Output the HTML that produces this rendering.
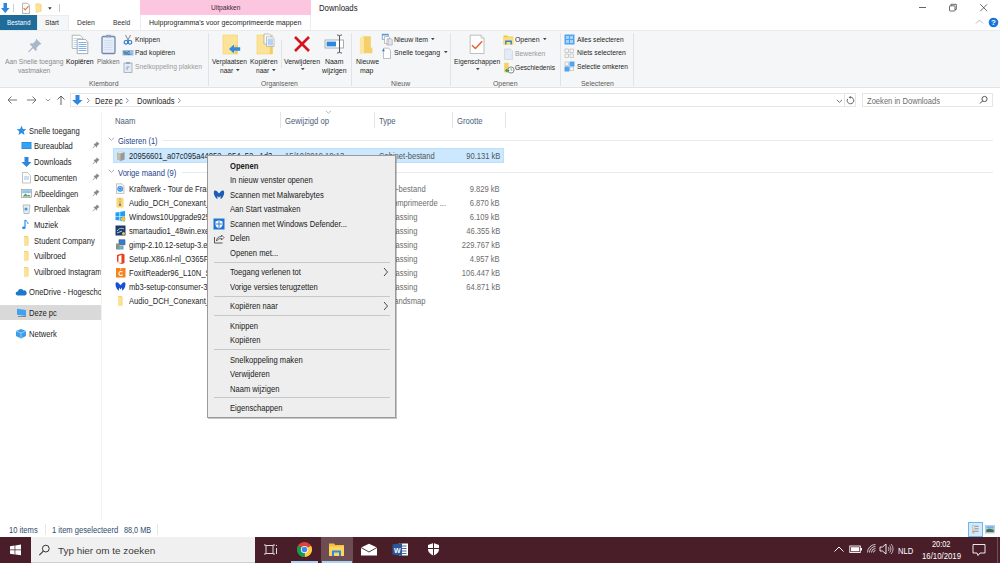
<!DOCTYPE html>
<html><head><meta charset="utf-8">
<style>
*{box-sizing:border-box;margin:0;padding:0}
html,body{width:1000px;height:563px;overflow:hidden;background:#fff;font-family:"Liberation Sans",sans-serif;position:relative}
.a{position:absolute}
.t{position:absolute;white-space:nowrap;line-height:10px}
svg{overflow:visible}
</style></head><body>
<div class="a" style="left:140px;top:0px;width:171px;height:15px;background:#fcc6e0"></div>
<div class="t" style="left:211px;top:2.5px;font-size:6.6px;color:#3b2b33;">Uitpakken</div>
<div class="t" style="left:318.5px;top:3.3000000000000007px;font-size:8.76px;color:#222;transform:scaleX(0.89);transform-origin:0 50%;">Downloads</div>
<svg class="a" style="left:0px;top:2px" width="12" height="12" viewBox="0 0 12 12"><path d="M3.5 1h3.5v5h2.5l-4.25 5-4.25-5h2.5z" fill="#2e86de"/></svg>
<div class="a" style="left:13px;top:4px;width:1px;height:8px;background:#cfcfcf"></div>
<svg class="a" style="left:21px;top:2px" width="10" height="12" viewBox="0 0 10 12"><path d="M1.5 1.2h5l2 2v8.3h-7z" fill="#f8f8f8" stroke="#9a9a9a" stroke-width="0.7"/><path d="M2.6 6.2l1.6 1.6 3.4-3.6" stroke="#ee6a35" stroke-width="1.1" fill="none"/></svg>
<svg class="a" style="left:35px;top:3px" width="8" height="10" viewBox="0 0 8 10"><path d="M0.5 0.5h4.5l1.5 1.2v6.8l-5.5 1.5z" fill="#f5d36e"/><path d="M0.5 1.5l5-.5v7.5l-5 1.3z" fill="#fbe29a"/></svg>
<svg class="a" style="left:48px;top:7px" width="4" height="3" viewBox="0 0 4 3"><path d="M0.2 0.2h3.4L1.9 2.8z" fill="#333"/></svg>
<div class="a" style="left:59px;top:4px;width:1px;height:8px;background:#c8c8c8"></div>
<div class="a" style="left:919px;top:7px;width:7px;height:1px;background:#666"></div>
<svg class="a" style="left:948px;top:3px" width="10" height="10" viewBox="0 0 10 10"><rect x="1.5" y="2.8" width="5.5" height="5.2" rx="0.6" fill="none" stroke="#444" stroke-width="0.8"/><path d="M3 2.8V1.3h5.3v5.2H7" fill="none" stroke="#444" stroke-width="0.8"/></svg>
<svg class="a" style="left:979px;top:3px" width="10" height="10" viewBox="0 0 10 10"><path d="M1.3 1.3l6.8 6.8M8.1 1.3l-6.8 6.8" stroke="#444" stroke-width="0.8"/></svg>
<div class="a" style="left:0px;top:15px;width:37px;height:15px;background:#1f6b99"></div>
<div class="t" style="left:7px;top:17.5px;font-size:6.4px;color:#ffffff;">Bestand</div>
<div class="a" style="left:37px;top:15px;width:32px;height:16px;background:#f5f6f7;border:1px solid #ebeced;border-bottom:none"></div>
<div class="t" style="left:45px;top:17.5px;font-size:6.6px;color:#262626;">Start</div>
<div class="t" style="left:77px;top:17.5px;font-size:6.8px;color:#333;">Delen</div>
<div class="t" style="left:113px;top:17.5px;font-size:6.7px;color:#333;">Beeld</div>
<div class="a" style="left:140px;top:15px;width:171px;height:15px;background:#fff;border-left:1px solid #ececec;border-right:1px solid #ececec"></div>
<div class="t" style="left:149px;top:17.5px;font-size:7.0px;color:#262626;">Hulpprogramma's voor gecomprimeerde mappen</div>
<svg class="a" style="left:975px;top:19px" width="9" height="6" viewBox="0 0 9 6"><path d="M1 4.5l3.5-3.5 3.5 3.5" stroke="#a8a8a8" stroke-width="0.8" fill="none"/></svg>
<svg class="a" style="left:988px;top:17px" width="11" height="11" viewBox="0 0 11 11"><circle cx="5.5" cy="5.5" r="4.8" fill="#1a73d9"/><text x="5.5" y="8.3" font-size="8" font-weight="bold" text-anchor="middle" fill="#fff" font-family="Liberation Sans">?</text></svg>
<div class="a" style="left:0px;top:30px;width:1000px;height:58px;background:#f5f6f7;border-top:1px solid #e9eaeb;border-bottom:1px solid #e2e3e4"></div>
<div class="a" style="left:208px;top:33px;width:1px;height:53px;background:#e2e3e4"></div>
<div class="a" style="left:351px;top:33px;width:1px;height:53px;background:#e2e3e4"></div>
<div class="a" style="left:450px;top:33px;width:1px;height:53px;background:#e2e3e4"></div>
<div class="a" style="left:560px;top:33px;width:1px;height:53px;background:#e2e3e4"></div>
<div class="a" style="left:633px;top:33px;width:1px;height:53px;background:#e2e3e4"></div>
<div class="a" style="left:281px;top:40px;width:1px;height:28px;background:#e2e3e4"></div>
<svg class="a" style="left:27px;top:37px" width="16" height="16" viewBox="0 0 16 16"><path d="M9 1.5l5.5 5.5-2 .8-3 3 .3 2.2-1 1-2.8-2.8L2 15.3l-.8-.3.2-.8 4.1-4.1L2.7 7.3l1-1 2.2.3 3-3z" fill="#a8b7cc"/></svg>
<div class="t" style="left:5px;top:56.5px;font-size:6.7px;color:#8a8a8a;">Aan Snelle toegang</div>
<div class="t" style="left:18px;top:65.6px;font-size:6.7px;color:#8a8a8a;">vastmaken</div>
<svg class="a" style="left:71px;top:34px" width="19" height="21" viewBox="0 0 19 21"><path d="M1.2 1.2h7.8l2.3 2.3v11H1.2z" fill="#fff" stroke="#9a9a9a" stroke-width="0.7"/><path d="M2.5 4.5h7.5M2.5 6.5h7.5M2.5 8.5h7.5M2.5 10.5h7.5M2.5 12.5h7.5" stroke="#a9ccf2" stroke-width="0.75"/><path d="M6.2 5.4h8.3l2.3 2.3v11.9H6.2z" fill="#fff" stroke="#8a8a8a" stroke-width="0.7"/><path d="M7.5 8.5h8M7.5 10.5h8M7.5 12.5h8M7.5 14.5h8M7.5 16.5h8" stroke="#7fb2ea" stroke-width="1"/></svg>
<div class="t" style="left:66px;top:56.5px;font-size:6.9px;color:#111111;">Kopiëren</div>
<svg class="a" style="left:100px;top:34px" width="17" height="21" viewBox="0 0 17 21"><rect x="2" y="2.5" width="13" height="17" rx="1.2" fill="#e6eefa" stroke="#7387aa" stroke-width="1.3"/><rect x="6" y="0.8" width="5" height="2.5" fill="#8e9fbd"/><path d="M4.2 6.5h8.6M4.2 8.8h8.6M4.2 11.1h8.6M4.2 13.4h8.6M4.2 15.7h8.6" stroke="#c9d8ee" stroke-width="0.8"/></svg>
<div class="t" style="left:97px;top:56.5px;font-size:6.3px;color:#6a6a6a;">Plakken</div>
<svg class="a" style="left:123px;top:34px" width="10" height="11" viewBox="0 0 10 11"><path d="M2.5 1l3 6M7.5 1l-3 6" stroke="#777" stroke-width="0.9"/><circle cx="3" cy="8.3" r="1.8" fill="none" stroke="#2b7fd0" stroke-width="1.2"/><circle cx="7" cy="8.3" r="1.8" fill="none" stroke="#2b7fd0" stroke-width="1.2"/></svg>
<div class="t" style="left:135px;top:34.5px;font-size:6.8px;color:#262626;">Knippen</div>
<svg class="a" style="left:122px;top:49px" width="12" height="8" viewBox="0 0 12 8"><rect x="0.5" y="1" width="11" height="5.5" fill="#8fc3ef"/><text x="1.3" y="5.6" font-size="4.5" fill="#223" font-family="Liberation Sans">%0..</text></svg>
<div class="t" style="left:135px;top:48px;font-size:6.8px;color:#262626;">Pad kopiëren</div>
<svg class="a" style="left:123px;top:61px" width="10" height="12" viewBox="0 0 10 12"><rect x="1" y="2" width="8" height="9.5" fill="#e4ebf4" stroke="#9aa8bb" stroke-width="0.8"/><rect x="3" y="1" width="4" height="2" fill="#9aa8bb"/><path d="M4 9V6h2.5" stroke="#7a8aa8" stroke-width="0.8" fill="none"/></svg>
<div class="t" style="left:135px;top:61.5px;font-size:6.7px;color:#9a9a9a;">Snelkoppeling plakken</div>
<div class="t" style="left:89px;top:78.5px;font-size:6.9px;color:#5b5b5b;">Klembord</div>
<svg class="a" style="left:221px;top:34px" width="20" height="21" viewBox="0 0 20 21"><rect x="2" y="1" width="14.5" height="19" fill="#fce39a"/><rect x="2" y="1" width="14.5" height="19" fill="none" stroke="#f3cf62" stroke-width="0.6"/><rect x="13.8" y="11" width="2.7" height="9" fill="#f5cd5c"/><path d="M8 15l5-4.5v2.8h6.2v3.4H13v2.8z" fill="#2f8ae0"/></svg>
<div class="t" style="left:212px;top:56.5px;font-size:6.6px;color:#262626;">Verplaatsen</div>
<div class="t" style="left:220px;top:65.6px;font-size:6.6px;color:#262626;">naar</div>
<svg class="a" style="left:235.5px;top:68.8px" width="4" height="3" viewBox="0 0 4 3"><path d="M0 0h3.6L1.8 2.2z" fill="#444"/></svg>
<svg class="a" style="left:255px;top:33px" width="22" height="22" viewBox="0 0 22 22"><rect x="2" y="2" width="15.5" height="19" fill="#fce39a" stroke="#f3cf62" stroke-width="0.6"/><rect x="14.8" y="12" width="2.7" height="9" fill="#f5cd5c"/><path d="M9 1h5.5l1.5 1.5V11H9z" fill="#fafafa" stroke="#9a9a9a" stroke-width="0.6"/><path d="M11.5 3.8h5.8l1.7 1.7V13.5h-7.5z" fill="#fff" stroke="#9a9a9a" stroke-width="0.6"/><rect x="12.6" y="5.5" width="5.4" height="7" fill="#b5d2f7"/></svg>
<div class="t" style="left:250px;top:56.5px;font-size:6.9px;color:#262626;">Kopiëren</div>
<div class="t" style="left:256px;top:65.6px;font-size:6.6px;color:#262626;">naar</div>
<svg class="a" style="left:271.5px;top:68.8px" width="4" height="3" viewBox="0 0 4 3"><path d="M0 0h3.6L1.8 2.2z" fill="#444"/></svg>
<svg class="a" style="left:293px;top:35px" width="18" height="18" viewBox="0 0 18 18"><path d="M2 2l14 14M16 2L2 16" stroke="#d8121f" stroke-width="2.6"/></svg>
<div class="t" style="left:284px;top:56.5px;font-size:6.9px;color:#262626;">Verwijderen</div>
<svg class="a" style="left:300.5px;top:67.8px" width="4" height="3" viewBox="0 0 4 3"><path d="M0 0h3.6L1.8 2.2z" fill="#444"/></svg>
<svg class="a" style="left:324px;top:34px" width="22" height="20" viewBox="0 0 22 20"><rect x="1" y="6" width="18.5" height="8" fill="#fff" stroke="#9a9a9a" stroke-width="0.8"/><rect x="2.6" y="7.6" width="9.4" height="4.8" fill="#2b88e0"/><path d="M15.5 1.5v17M13 1c1.3 0 2.5.5 2.5 1.5 0-1 1.2-1.5 2.5-1.5M13 19c1.3 0 2.5-.5 2.5-1.5 0 1 1.2 1.5 2.5 1.5" stroke="#444" stroke-width="0.9" fill="none"/></svg>
<div class="t" style="left:325px;top:56.5px;font-size:6.9px;color:#262626;">Naam</div>
<div class="t" style="left:322px;top:65.6px;font-size:6.9px;color:#262626;">wijzigen</div>
<div class="t" style="left:261px;top:78.5px;font-size:6.7px;color:#5b5b5b;">Organiseren</div>
<svg class="a" style="left:358px;top:35px" width="17" height="20" viewBox="0 0 17 20"><path d="M4.5 1.2h8.3v10.8l1.6 1.6v4.6H4.5z" fill="#f5d06a"/><path d="M1.8 2.8L6 1.2v16.6l-4.2 1.7z" fill="#fce6a4"/></svg>
<div class="t" style="left:356px;top:56.5px;font-size:6.9px;color:#262626;">Nieuwe</div>
<div class="t" style="left:360px;top:65.6px;font-size:6.9px;color:#262626;">map</div>
<svg class="a" style="left:381px;top:33px" width="13" height="13" viewBox="0 0 13 13"><rect x="1.2" y="1.2" width="6" height="5" fill="#fff" stroke="#4a8fd6" stroke-width="0.7"/><rect x="1.2" y="1.2" width="6" height="1.2" fill="#4a8fd6"/><path d="M3.5 3.5h4l1 1v6h-5z" fill="#fff" stroke="#999" stroke-width="0.6"/><path d="M6 5.8h4.2l1 1v5.2H6z" fill="#dceaf8" stroke="#999" stroke-width="0.6"/><path d="M7.5 6v6" stroke="#e7a4b4" stroke-width="0.6"/></svg>
<div class="t" style="left:394px;top:34.5px;font-size:6.9px;color:#262626;">Nieuw item</div>
<svg class="a" style="left:430.5px;top:37.8px" width="4" height="3" viewBox="0 0 4 3"><path d="M0 0h3.6L1.8 2.2z" fill="#444"/></svg>
<svg class="a" style="left:381px;top:47px" width="11" height="12" viewBox="0 0 11 12"><path d="M2.5 1.2h5l2 2v8.3h-7z" fill="#fff" stroke="#999" stroke-width="0.6"/><path d="M0.8 4.2l2-2.6 .9 2.6z" fill="#2b7fd0"/></svg>
<div class="t" style="left:394px;top:48px;font-size:6.9px;color:#262626;">Snelle toegang</div>
<svg class="a" style="left:443.5px;top:51.3px" width="4" height="3" viewBox="0 0 4 3"><path d="M0 0h3.6L1.8 2.2z" fill="#444"/></svg>
<div class="t" style="left:391px;top:78.5px;font-size:6.9px;color:#5b5b5b;">Nieuw</div>
<svg class="a" style="left:468px;top:34px" width="18" height="21" viewBox="0 0 18 21"><path d="M2.2 1.2h10.8l3 3v15.3H2.2z" fill="#fff" stroke="#a5a5a5" stroke-width="0.7"/><path d="M13 1.2v3h3" fill="#eee" stroke="#b5b5b5" stroke-width="0.6"/><path d="M4 11.3l3.4 3.2 6.8-7.2" stroke="#e8602c" stroke-width="1.4" fill="none"/></svg>
<div class="t" style="left:454px;top:56.5px;font-size:6.7px;color:#262626;">Eigenschappen</div>
<svg class="a" style="left:475.5px;top:67.8px" width="4" height="3" viewBox="0 0 4 3"><path d="M0 0h3.6L1.8 2.2z" fill="#444"/></svg>
<svg class="a" style="left:503px;top:35px" width="11" height="10" viewBox="0 0 11 10"><path d="M0.5 0.5h3.5l1 1h5v8H0.5z" fill="#f3c343"/><rect x="0.5" y="2.2" width="10" height="7.3" fill="#fcdc7c"/><path d="M2.8 9.5V6.2h5.4v3.3" stroke="#2b85db" stroke-width="1.4" fill="none"/></svg>
<div class="t" style="left:515px;top:35px;font-size:6.9px;color:#262626;">Openen</div>
<svg class="a" style="left:542.5px;top:38.3px" width="4" height="3" viewBox="0 0 4 3"><path d="M0 0h3.6L1.8 2.2z" fill="#444"/></svg>
<svg class="a" style="left:503px;top:48px" width="11" height="12" viewBox="0 0 11 12"><path d="M1.5 1h6l2 2v8.5h-8z" fill="#e2eaf5" stroke="#c5d0de" stroke-width="0.6"/><path d="M2.8 10l5.6-7.2" stroke="#fff" stroke-width="1.3"/><path d="M2.8 10l5.6-7.2" stroke="#b8c6d8" stroke-width="0.5"/></svg>
<div class="t" style="left:515px;top:49px;font-size:6.8px;color:#9a9a9a;">Bewerken</div>
<svg class="a" style="left:503px;top:62px" width="12" height="12" viewBox="0 0 12 12"><path d="M1.2 0.8h4.5v9.5H1.2z" fill="#f6d060"/><circle cx="8" cy="8" r="3.1" fill="#fff" stroke="#6a6a6a" stroke-width="0.8"/><path d="M8 6v2.2h1.5" stroke="#6a6a6a" stroke-width="0.6" fill="none"/><path d="M1.8 8.6l2.6-2.2v1.3h1.8v1.8H4.4v1.3z" fill="#2ea44f"/></svg>
<div class="t" style="left:515px;top:63px;font-size:6.6px;color:#262626;">Geschiedenis</div>
<div class="t" style="left:493px;top:78.5px;font-size:6.9px;color:#5b5b5b;">Openen</div>
<svg class="a" style="left:564px;top:34px" width="11" height="11" viewBox="0 0 11 11"><rect x="0.5" y="0.5" width="10" height="10" fill="#4fa3ef"/><path d="M2 2h3v3H2zM6 2h3v3H6zM2 6h3v3H2zM6 6h3v3H6z" fill="#a9d3fa"/></svg>
<div class="t" style="left:577px;top:34.5px;font-size:6.6px;color:#262626;">Alles selecteren</div>
<svg class="a" style="left:564px;top:48px" width="11" height="11" viewBox="0 0 11 11"><path d="M1 1h3.5v3.5H1zM6 1h3.5v3.5H6zM1 6h3.5v3.5H1zM6 6h3.5v3.5H6z" fill="none" stroke="#bbb" stroke-width="0.7"/></svg>
<div class="t" style="left:577px;top:48px;font-size:6.8px;color:#262626;">Niets selecteren</div>
<svg class="a" style="left:564px;top:61px" width="11" height="11" viewBox="0 0 11 11"><path d="M1 1h3.5v3.5H1zM6 6h3.5v3.5H6z" fill="none" stroke="#bbb" stroke-width="0.7"/><rect x="5.5" y="0.5" width="5" height="5" fill="#4fa3ef"/><rect x="0.5" y="5.5" width="5" height="5" fill="#4fa3ef"/></svg>
<div class="t" style="left:577px;top:61.5px;font-size:6.6px;color:#262626;">Selectie omkeren</div>
<div class="t" style="left:581px;top:78.5px;font-size:6.9px;color:#5b5b5b;">Selecteren</div>
<svg class="a" style="left:6px;top:95px" width="12" height="10" viewBox="0 0 12 10"><path d="M2 5h9M5.5 1.5L2 5l3.5 3.5" stroke="#666" stroke-width="0.9" fill="none"/></svg>
<svg class="a" style="left:26px;top:95px" width="12" height="10" viewBox="0 0 12 10"><path d="M1 5h9M6.5 1.5L10 5 6.5 8.5" stroke="#666" stroke-width="0.9" fill="none"/></svg>
<svg class="a" style="left:45px;top:98px" width="6" height="4" viewBox="0 0 6 4"><path d="M0.8 0.8l2.2 2.2 2.2-2.2" stroke="#888" stroke-width="0.8" fill="none"/></svg>
<svg class="a" style="left:56px;top:94px" width="10" height="12" viewBox="0 0 10 12"><path d="M5 11V2M1.5 5.5L5 2l3.5 3.5" stroke="#555" stroke-width="0.9" fill="none"/></svg>
<div class="a" style="left:70px;top:93px;width:786px;height:14px;background:#fff;border:1px solid #e6e6e6"></div>
<div class="a" style="left:844px;top:94px;width:1px;height:13px;background:#e3e3e3"></div>
<svg class="a" style="left:72px;top:94px" width="11" height="12" viewBox="0 0 11 12"><path d="M3.5 1h4v5h3l-5.2 5L0.1 6h3.4z" fill="#2e86de"/></svg>
<svg class="a" style="left:86px;top:97px" width="5" height="7" viewBox="0 0 5 7"><path d="M1 1l2.3 2.5L1 6" stroke="#777" stroke-width="0.8" fill="none"/></svg>
<div class="t" style="left:95px;top:95.5px;font-size:8.54px;color:#1e1e1e;transform:scaleX(0.89);transform-origin:0 50%;">Deze pc</div>
<svg class="a" style="left:125px;top:97px" width="5" height="7" viewBox="0 0 5 7"><path d="M1 1l2.3 2.5L1 6" stroke="#777" stroke-width="0.8" fill="none"/></svg>
<div class="t" style="left:137px;top:95.5px;font-size:8.54px;color:#1e1e1e;transform:scaleX(0.89);transform-origin:0 50%;">Downloads</div>
<svg class="a" style="left:177px;top:97px" width="5" height="7" viewBox="0 0 5 7"><path d="M1 1l2.3 2.5L1 6" stroke="#777" stroke-width="0.8" fill="none"/></svg>
<svg class="a" style="left:836px;top:99px" width="7" height="5" viewBox="0 0 7 5"><path d="M0.8 0.8l2.6 2.6 2.6-2.6" stroke="#666" stroke-width="0.9" fill="none"/></svg>
<svg class="a" style="left:846px;top:94px" width="11" height="12" viewBox="0 0 11 12"><path d="M4.5 3.2A3.3 3.3 0 1 1 1.64 4.85" stroke="#555" stroke-width="0.9" fill="none"/><path d="M2.6 3.3L4.7 1.9V4.7z" fill="#555"/></svg>
<div class="a" style="left:862px;top:93px;width:131px;height:14px;background:#fff;border:1px solid #e6e6e6"></div>
<div class="t" style="left:867px;top:95.5px;font-size:8.54px;color:#6d6d6d;transform:scaleX(0.89);transform-origin:0 50%;">Zoeken in Downloads</div>
<svg class="a" style="left:979px;top:95px" width="10" height="10" viewBox="0 0 10 10"><circle cx="5.5" cy="4" r="2.6" stroke="#444" stroke-width="0.9" fill="none"/><path d="M3.6 5.9L1 8.5" stroke="#444" stroke-width="1"/></svg>
<div class="a" style="left:101px;top:112px;width:1px;height:408px;background:#f2f2f2"></div>
<div class="a" style="left:0px;top:305px;width:101px;height:15px;background:#d9d9d9"></div>
<svg class="a" style="left:16px;top:125px" width="11" height="11" viewBox="0 0 11 11"><path d="M5.5 0.8l1.4 3.2 3.4.3-2.6 2.2.8 3.4-3-1.8-3 1.8.8-3.4L.7 4.3l3.4-.3z" fill="#2b8fe6"/></svg>
<div class="t" style="left:29px;top:125.5px;font-size:8.54px;color:#1e1e1e;transform:scaleX(0.89);transform-origin:0 50%;">Snelle toegang</div>
<svg class="a" style="left:21px;top:140px" width="11" height="11" viewBox="0 0 11 11"><rect x="0.5" y="2" width="10" height="7" fill="#2a8ee6"/><rect x="1.5" y="3" width="8" height="5" fill="#3aa3f0"/></svg>
<div class="t" style="left:34px;top:141px;font-size:8.54px;color:#1e1e1e;transform:scaleX(0.89);transform-origin:0 50%;width:75px;overflow:hidden">Bureaublad</div>
<svg class="a" style="left:21px;top:156px" width="11" height="11" viewBox="0 0 11 11"><path d="M3.5 1h4v5h3l-5 5-5-5h3z" fill="#2e86de"/></svg>
<div class="t" style="left:34px;top:157px;font-size:8.54px;color:#1e1e1e;transform:scaleX(0.89);transform-origin:0 50%;width:75px;overflow:hidden">Downloads</div>
<svg class="a" style="left:21px;top:172px" width="11" height="11" viewBox="0 0 11 11"><path d="M1.5 0.5h5l3 3v7.5h-8z" fill="#fff" stroke="#aaa" stroke-width="0.7"/><path d="M3 5h5M3 7h5" stroke="#7aaee8" stroke-width="0.8"/></svg>
<div class="t" style="left:34px;top:172.5px;font-size:8.54px;color:#1e1e1e;transform:scaleX(0.89);transform-origin:0 50%;width:75px;overflow:hidden">Documenten</div>
<svg class="a" style="left:21px;top:188px" width="11" height="11" viewBox="0 0 11 11"><rect x="0.5" y="1.5" width="10" height="8" fill="#fff" stroke="#999" stroke-width="0.7"/><path d="M1.5 8.5l3-3 2 2 1.5-1 2 2z" fill="#5a9a5a"/><rect x="1.2" y="2.2" width="8.6" height="3" fill="#8cc4f0"/></svg>
<div class="t" style="left:34px;top:188.5px;font-size:8.54px;color:#1e1e1e;transform:scaleX(0.89);transform-origin:0 50%;width:75px;overflow:hidden">Afbeeldingen</div>
<svg class="a" style="left:21px;top:203px" width="11" height="11" viewBox="0 0 11 11"><path d="M2 2h7l-1 8.5H3z" fill="#e6ecf2" stroke="#9aa" stroke-width="0.7"/><circle cx="5" cy="6" r="1.5" fill="#4a90d9"/></svg>
<div class="t" style="left:34px;top:204px;font-size:8.54px;color:#1e1e1e;transform:scaleX(0.89);transform-origin:0 50%;width:75px;overflow:hidden">Prullenbak</div>
<svg class="a" style="left:21px;top:219px" width="11" height="11" viewBox="0 0 11 11"><path d="M4 1v7.5" stroke="#2b8fe6" stroke-width="1.2"/><ellipse cx="2.8" cy="8.8" rx="1.8" ry="1.4" fill="#2b8fe6"/><path d="M4 1c1.5 1 3 1.8 3 4" stroke="#2b8fe6" stroke-width="1" fill="none"/></svg>
<div class="t" style="left:34px;top:219.5px;font-size:8.54px;color:#1e1e1e;transform:scaleX(0.89);transform-origin:0 50%;width:75px;overflow:hidden">Muziek</div>
<svg class="a" style="left:21px;top:235px" width="11" height="11" viewBox="0 0 11 11"><path d="M3 1h3.5l1 1v8.5H3z" fill="#f6d36a"/><path d="M3 1.8l3.6 .6v8.6L3 10.5z" fill="#fbe39b"/></svg>
<div class="t" style="left:34px;top:235.5px;font-size:8.54px;color:#1e1e1e;transform:scaleX(0.89);transform-origin:0 50%;width:75px;overflow:hidden">Student Company</div>
<svg class="a" style="left:21px;top:250px" width="11" height="11" viewBox="0 0 11 11"><path d="M3 1h3.5l1 1v8.5H3z" fill="#f6d36a"/><path d="M3 1.8l3.6 .6v8.6L3 10.5z" fill="#fbe39b"/></svg>
<div class="t" style="left:34px;top:251px;font-size:8.54px;color:#1e1e1e;transform:scaleX(0.89);transform-origin:0 50%;width:75px;overflow:hidden">Vuilbroed</div>
<svg class="a" style="left:21px;top:266px" width="11" height="11" viewBox="0 0 11 11"><path d="M3 1h3.5l1 1v8.5H3z" fill="#f6d36a"/><path d="M3 1.8l3.6 .6v8.6L3 10.5z" fill="#fbe39b"/></svg>
<div class="t" style="left:34px;top:266.5px;font-size:8.54px;color:#1e1e1e;transform:scaleX(0.89);transform-origin:0 50%;width:75px;overflow:hidden">Vuilbroed Instagram</div>
<svg class="a" style="left:92px;top:141px" width="8" height="8" viewBox="0 0 8 8"><path d="M5 0.5l2.5 2.5-1 .4-1.5 1.5.1 1.1-.5.5-1.4-1.4L1 7.3l-.4-.1.1-.4 2.2-2.2-1.4-1.4.5-.5 1.1.1 1.5-1.5z" fill="#888"/></svg>
<svg class="a" style="left:92px;top:157px" width="8" height="8" viewBox="0 0 8 8"><path d="M5 0.5l2.5 2.5-1 .4-1.5 1.5.1 1.1-.5.5-1.4-1.4L1 7.3l-.4-.1.1-.4 2.2-2.2-1.4-1.4.5-.5 1.1.1 1.5-1.5z" fill="#888"/></svg>
<svg class="a" style="left:92px;top:173px" width="8" height="8" viewBox="0 0 8 8"><path d="M5 0.5l2.5 2.5-1 .4-1.5 1.5.1 1.1-.5.5-1.4-1.4L1 7.3l-.4-.1.1-.4 2.2-2.2-1.4-1.4.5-.5 1.1.1 1.5-1.5z" fill="#888"/></svg>
<svg class="a" style="left:92px;top:189px" width="8" height="8" viewBox="0 0 8 8"><path d="M5 0.5l2.5 2.5-1 .4-1.5 1.5.1 1.1-.5.5-1.4-1.4L1 7.3l-.4-.1.1-.4 2.2-2.2-1.4-1.4.5-.5 1.1.1 1.5-1.5z" fill="#888"/></svg>
<svg class="a" style="left:92px;top:204px" width="8" height="8" viewBox="0 0 8 8"><path d="M5 0.5l2.5 2.5-1 .4-1.5 1.5.1 1.1-.5.5-1.4-1.4L1 7.3l-.4-.1.1-.4 2.2-2.2-1.4-1.4.5-.5 1.1.1 1.5-1.5z" fill="#888"/></svg>
<svg class="a" style="left:15px;top:287px" width="12" height="10" viewBox="0 0 12 10"><path d="M2.5 8.5a2 2 0 0 1 .3-4 3 3 0 0 1 5.5-1 2.4 2.4 0 0 1 1.5 5z" fill="#1a78d0"/></svg>
<div class="t" style="left:29px;top:287.2px;font-size:8.54px;color:#1e1e1e;transform:scaleX(0.89);transform-origin:0 50%;width:81px;overflow:hidden">OneDrive - Hogeschool</div>
<svg class="a" style="left:16px;top:307px" width="12" height="11" viewBox="0 0 12 11"><rect x="1" y="1.5" width="9" height="6" fill="#3fa2ee" transform="skewY(8)"/><path d="M2 9.5h8" stroke="#888" stroke-width="1"/></svg>
<div class="t" style="left:29px;top:308px;font-size:8.54px;color:#1e1e1e;transform:scaleX(0.89);transform-origin:0 50%;">Deze pc</div>
<svg class="a" style="left:15px;top:328px" width="12" height="11" viewBox="0 0 12 11"><path d="M1 3l5-2 5 2v5l-5 2.5L1 8z" fill="#3d9be9"/><path d="M1 3l5 2 5-2M6 5v5.5" stroke="#bfe0fb" stroke-width="0.7" fill="none"/></svg>
<div class="t" style="left:29px;top:328.7px;font-size:8.54px;color:#1e1e1e;transform:scaleX(0.89);transform-origin:0 50%;">Netwerk</div>
<div class="a" style="left:280px;top:112px;width:1px;height:16px;background:#e5e5e5"></div>
<div class="a" style="left:374px;top:112px;width:1px;height:16px;background:#e5e5e5"></div>
<div class="a" style="left:452px;top:112px;width:1px;height:16px;background:#e5e5e5"></div>
<div class="a" style="left:505px;top:112px;width:1px;height:16px;background:#e5e5e5"></div>
<svg class="a" style="left:325px;top:110px" width="7" height="4" viewBox="0 0 7 4"><path d="M0.8 0.8l2.6 2.4 2.6-2.4" stroke="#999" stroke-width="0.7" fill="none"/></svg>
<div class="t" style="left:115px;top:115.5px;font-size:8.65px;color:#4c607a;transform:scaleX(0.89);transform-origin:0 50%;">Naam</div>
<div class="t" style="left:285px;top:115.5px;font-size:8.65px;color:#4c607a;transform:scaleX(0.89);transform-origin:0 50%;">Gewijzigd op</div>
<div class="t" style="left:379px;top:115.5px;font-size:8.65px;color:#4c607a;transform:scaleX(0.89);transform-origin:0 50%;">Type</div>
<div class="t" style="left:457px;top:115.5px;font-size:8.65px;color:#4c607a;transform:scaleX(0.89);transform-origin:0 50%;">Grootte</div>
<svg class="a" style="left:108px;top:137px" width="7" height="5" viewBox="0 0 7 5"><path d="M0.8 0.8l2.6 2.6 2.6-2.6" stroke="#999" stroke-width="0.8" fill="none"/></svg>
<div class="t" style="left:118px;top:135.5px;font-size:8.43px;color:#1e3f8a;transform:scaleX(0.89);transform-origin:0 50%;">Gisteren (1)</div>
<div class="a" style="left:162px;top:140px;width:831px;height:1px;background:#e8eaf0"></div>
<div class="a" style="left:113px;top:148px;width:391px;height:15px;background:#cce8ff;border:1px solid #bcdffb"></div>
<div class="t" style="left:129px;top:151px;font-size:8.54px;color:#1e1e1e;transform:scaleX(0.89);transform-origin:0 50%;">20956601_a07c095a44052...954_52...1d3</div>
<div class="t" style="left:285px;top:151px;font-size:8.54px;color:#555;transform:scaleX(0.89);transform-origin:0 50%;">15/10/2019 10:13</div>
<div class="t" style="left:379px;top:151px;font-size:8.54px;color:#555;transform:scaleX(0.89);transform-origin:0 50%;">Cabinet-bestand</div>
<div class="t" style="right:500px;top:151px;font-size:8.54px;color:#555;transform:scaleX(0.89);transform-origin:100% 50%;">90.131 kB</div>
<svg class="a" style="left:115px;top:150px" width="11" height="11" viewBox="0 0 11 11"><path d="M2 2.5L6 1l3.5 1.2v7.3L5.5 11 2 9.5z" fill="#b9b9b9"/><path d="M2 2.5L6 1l3.5 1.2L5.5 3.6z" fill="#e4e4e4"/><path d="M5.5 3.6l4-1.4v7.3L5.5 11z" fill="#9a9a9a"/><path d="M2.8 5.2l2 .8v1.4l-2-.8z" fill="#e8c84a"/></svg>
<svg class="a" style="left:108px;top:169px" width="7" height="5" viewBox="0 0 7 5"><path d="M0.8 0.8l2.6 2.6 2.6-2.6" stroke="#999" stroke-width="0.8" fill="none"/></svg>
<div class="t" style="left:118px;top:167.5px;font-size:8.54px;color:#1e3f8a;transform:scaleX(0.89);transform-origin:0 50%;">Vorige maand (9)</div>
<div class="a" style="left:182px;top:172px;width:811px;height:1px;background:#e8eaf0"></div>
<svg class="a" style="left:115px;top:183px" width="11" height="11" viewBox="0 0 11 11"><path d="M1.5 0.8h5.5l2 2v7.7H1.5z" fill="#f4f6f8" stroke="#a5a5a5" stroke-width="0.6"/><circle cx="5.2" cy="5.8" r="2.9" fill="#3d8fe0"/><circle cx="5.2" cy="5.8" r="1.6" fill="none" stroke="#bfe0fb" stroke-width="0.5"/></svg>
<div class="t" style="left:129px;top:184px;font-size:8.54px;color:#1e1e1e;transform:scaleX(0.89);transform-origin:0 50%;">Kraftwerk - Tour de France</div>
<div class="t" style="left:383px;top:184px;font-size:8.54px;color:#6d6d6d;transform:scaleX(0.89);transform-origin:0 50%;">ISO-bestand</div>
<div class="t" style="right:500px;top:184px;font-size:8.54px;color:#6d6d6d;transform:scaleX(0.89);transform-origin:100% 50%;">9.829 kB</div>
<svg class="a" style="left:115px;top:197px" width="11" height="11" viewBox="0 0 11 11"><path d="M1.5 0.8h7v9.7h-7z" fill="#f8d775"/><path d="M5 0.8v8" stroke="#8a8a8a" stroke-width="1" stroke-dasharray="0.8 0.8"/><rect x="4.2" y="6.5" width="1.6" height="2.5" fill="#777"/></svg>
<div class="t" style="left:129px;top:198px;font-size:8.54px;color:#1e1e1e;transform:scaleX(0.89);transform-origin:0 50%;">Audio_DCH_Conexant_</div>
<div class="t" style="left:379px;top:198px;font-size:8.54px;color:#6d6d6d;transform:scaleX(0.89);transform-origin:0 50%;">Gecomprimeerde ...</div>
<div class="t" style="right:500px;top:198px;font-size:8.54px;color:#6d6d6d;transform:scaleX(0.89);transform-origin:100% 50%;">6.870 kB</div>
<svg class="a" style="left:115px;top:211px" width="11" height="11" viewBox="0 0 11 11"><path d="M0.5 1.5l4-.6v4H.5zM5.2.8L10 .1v4.8H5.2zM.5 5.6h4v4l-4-.6zM5.2 5.6H10v4.8l-4.8-.7z" fill="#1ea0f0"/><path d="M6 7l2.5-1 2 1v2l-2.2 1.5L6 9z" fill="#f5c342"/></svg>
<div class="t" style="left:129px;top:212px;font-size:8.54px;color:#1e1e1e;transform:scaleX(0.89);transform-origin:0 50%;">Windows10Upgrade9252</div>
<div class="t" style="left:379px;top:212px;font-size:8.54px;color:#6d6d6d;transform:scaleX(0.89);transform-origin:0 50%;">Toepassing</div>
<div class="t" style="right:500px;top:212px;font-size:8.54px;color:#6d6d6d;transform:scaleX(0.89);transform-origin:100% 50%;">6.109 kB</div>
<svg class="a" style="left:115px;top:225px" width="11" height="11" viewBox="0 0 11 11"><rect x="0.5" y="0.5" width="10" height="10" fill="#1f3a6e"/><path d="M2 6c2-3 5-3 7-2M2 8l5-2" stroke="#cfe" stroke-width="0.8" fill="none"/><circle cx="8.5" cy="8.5" r="1.5" fill="#f5c342"/></svg>
<div class="t" style="left:129px;top:226px;font-size:8.54px;color:#1e1e1e;transform:scaleX(0.89);transform-origin:0 50%;">smartaudio1_48win.exe</div>
<div class="t" style="left:379px;top:226px;font-size:8.54px;color:#6d6d6d;transform:scaleX(0.89);transform-origin:0 50%;">Toepassing</div>
<div class="t" style="right:500px;top:226px;font-size:8.54px;color:#6d6d6d;transform:scaleX(0.89);transform-origin:100% 50%;">46.355 kB</div>
<svg class="a" style="left:115px;top:239px" width="11" height="11" viewBox="0 0 11 11"><rect x="4" y="0.8" width="6" height="5" fill="#2f7fd6" stroke="#555" stroke-width="0.6"/><path d="M1 4.5h3.5v6H1z" fill="#8a8f96"/><path d="M3.5 6.5h5v4h-5z" fill="#6aa0c8"/><circle cx="5.5" cy="8.5" r="1.2" fill="#7dc27a"/></svg>
<div class="t" style="left:129px;top:240px;font-size:8.54px;color:#1e1e1e;transform:scaleX(0.89);transform-origin:0 50%;">gimp-2.10.12-setup-3.exe</div>
<div class="t" style="left:379px;top:240px;font-size:8.54px;color:#6d6d6d;transform:scaleX(0.89);transform-origin:0 50%;">Toepassing</div>
<div class="t" style="right:500px;top:240px;font-size:8.54px;color:#6d6d6d;transform:scaleX(0.89);transform-origin:100% 50%;">229.767 kB</div>
<svg class="a" style="left:115px;top:253px" width="11" height="11" viewBox="0 0 11 11"><path d="M2 2l5-1.5 2.5 1v8.5L7 11 2 9.5 6.5 10V2L3.5 3v5.5L2 9z" fill="#e8401c"/></svg>
<div class="t" style="left:129px;top:254px;font-size:8.54px;color:#1e1e1e;transform:scaleX(0.89);transform-origin:0 50%;">Setup.X86.nl-nl_O365ProPlus</div>
<div class="t" style="left:379px;top:254px;font-size:8.54px;color:#6d6d6d;transform:scaleX(0.89);transform-origin:0 50%;">Toepassing</div>
<div class="t" style="right:500px;top:254px;font-size:8.54px;color:#6d6d6d;transform:scaleX(0.89);transform-origin:100% 50%;">4.957 kB</div>
<svg class="a" style="left:115px;top:267px" width="11" height="11" viewBox="0 0 11 11"><rect x="1" y="1" width="9.5" height="9.5" fill="#f5821f"/><path d="M5.75 1v2" stroke="#fff" stroke-width="0.6"/><path d="M7.4 5.2A2 2 0 1 0 7.6 7.4" stroke="#fff" stroke-width="1.1" fill="none"/></svg>
<div class="t" style="left:129px;top:268px;font-size:8.54px;color:#1e1e1e;transform:scaleX(0.89);transform-origin:0 50%;">FoxitReader96_L10N_Setup</div>
<div class="t" style="left:379px;top:268px;font-size:8.54px;color:#6d6d6d;transform:scaleX(0.89);transform-origin:0 50%;">Toepassing</div>
<div class="t" style="right:500px;top:268px;font-size:8.54px;color:#6d6d6d;transform:scaleX(0.89);transform-origin:100% 50%;">106.447 kB</div>
<svg class="a" style="left:115px;top:281px" width="11" height="11" viewBox="0 0 11 11"><path d="M0.5 3C0.5 1.3 2.2 0.7 3.3 1.8L5.5 4.3 7.7 1.8C8.8 0.7 10.5 1.3 10.5 3 10.5 6 9.2 8.2 7.1 9.8L7 6.5 5.5 8.4 4 6.5 3.9 9.8C1.8 8.2 0.5 6 0.5 3z" fill="#1650d8"/></svg>
<div class="t" style="left:129px;top:282px;font-size:8.54px;color:#1e1e1e;transform:scaleX(0.89);transform-origin:0 50%;">mb3-setup-consumer-3.8</div>
<div class="t" style="left:379px;top:282px;font-size:8.54px;color:#6d6d6d;transform:scaleX(0.89);transform-origin:0 50%;">Toepassing</div>
<div class="t" style="right:500px;top:282px;font-size:8.54px;color:#6d6d6d;transform:scaleX(0.89);transform-origin:100% 50%;">64.871 kB</div>
<svg class="a" style="left:115px;top:295px" width="11" height="11" viewBox="0 0 11 11"><path d="M3 1h3.5l1 1v8.5H3z" fill="#f6d36a"/><path d="M3 1.8l3.6 .6v8.6L3 10.5z" fill="#fbe39b"/></svg>
<div class="t" style="left:129px;top:296px;font-size:8.54px;color:#1e1e1e;transform:scaleX(0.89);transform-origin:0 50%;">Audio_DCH_Conexant_</div>
<div class="t" style="left:379px;top:296px;font-size:8.54px;color:#6d6d6d;transform:scaleX(0.89);transform-origin:0 50%;">Bestandsmap</div>
<div class="t" style="left:9px;top:524.5px;font-size:8.54px;color:#2e4a6b;transform:scaleX(0.89);transform-origin:0 50%;">10 items</div>
<div class="a" style="left:45px;top:524px;width:1px;height:11px;background:#e6e6e6"></div>
<div class="t" style="left:52px;top:524.5px;font-size:8.54px;color:#2e4a6b;transform:scaleX(0.89);transform-origin:0 50%;">1 item geselecteerd</div>
<div class="t" style="left:124px;top:524.5px;font-size:8.54px;color:#2e4a6b;transform:scaleX(0.85);transform-origin:0 50%;">88,0 MB</div>
<div class="a" style="left:157px;top:524px;width:1px;height:11px;background:#e6e6e6"></div>
<div class="a" style="left:968px;top:522px;width:15px;height:15px;background:#d4eafb;border:1px solid #6cb8ee"></div>
<svg class="a" style="left:970px;top:524px" width="11" height="11" viewBox="0 0 11 11"><rect x="2.5" y="1.5" width="2" height="7.5" fill="#e6e6e6" stroke="#aaa" stroke-width="0.5"/><rect x="2.8" y="4.2" width="1.4" height="1.2" fill="#e8d86a"/><rect x="2.8" y="6.8" width="1.4" height="1.5" fill="#e8705a"/><path d="M5 2.3h3.6M5 4.8h3.6M5 7.3h3.6" stroke="#555" stroke-width="0.6"/></svg>
<svg class="a" style="left:985px;top:525px" width="11" height="9" viewBox="0 0 11 9"><rect x="0.5" y="0.5" width="9" height="7.5" fill="#eef4fa" stroke="#b5b5b5" stroke-width="0.7"/><rect x="1.2" y="1.2" width="7.6" height="2.5" fill="#6fb0ee"/><path d="M1.2 4.5l3 -.8 4.6 .8v2.8H1.2z" fill="#3f6f55"/></svg>
<div class="a" style="left:207px;top:155px;width:189px;height:263px;background:#eeeeee;border:1px solid #9a9a9a;box-shadow:1px 1px 0 rgba(0,0,0,0.22)"></div>
<div class="t" style="left:229.5px;top:160.6px;font-size:8.54px;color:#1a1a1a;transform:scaleX(0.89);transform-origin:0 50%;font-weight:bold">Openen</div>
<div class="t" style="left:229.5px;top:175.3px;font-size:8.54px;color:#1a1a1a;transform:scaleX(0.89);transform-origin:0 50%;">In nieuw venster openen</div>
<div class="t" style="left:229.5px;top:189.8px;font-size:8.54px;color:#1a1a1a;transform:scaleX(0.89);transform-origin:0 50%;">Scannen met Malwarebytes</div>
<div class="t" style="left:229.5px;top:204.2px;font-size:8.54px;color:#1a1a1a;transform:scaleX(0.89);transform-origin:0 50%;">Aan Start vastmaken</div>
<div class="t" style="left:229.5px;top:218.9px;font-size:8.54px;color:#1a1a1a;transform:scaleX(0.89);transform-origin:0 50%;">Scannen met Windows Defender...</div>
<div class="t" style="left:229.5px;top:233.4px;font-size:8.54px;color:#1a1a1a;transform:scaleX(0.89);transform-origin:0 50%;">Delen</div>
<div class="t" style="left:229.5px;top:247.8px;font-size:8.54px;color:#1a1a1a;transform:scaleX(0.89);transform-origin:0 50%;">Openen met...</div>
<div class="t" style="left:229.5px;top:267px;font-size:8.54px;color:#1a1a1a;transform:scaleX(0.89);transform-origin:0 50%;">Toegang verlenen tot</div>
<div class="t" style="left:229.5px;top:281.5px;font-size:8.54px;color:#1a1a1a;transform:scaleX(0.89);transform-origin:0 50%;">Vorige versies terugzetten</div>
<div class="t" style="left:229.5px;top:301.3px;font-size:8.54px;color:#1a1a1a;transform:scaleX(0.89);transform-origin:0 50%;">Kopiëren naar</div>
<div class="t" style="left:229.5px;top:320.8px;font-size:8.54px;color:#1a1a1a;transform:scaleX(0.89);transform-origin:0 50%;">Knippen</div>
<div class="t" style="left:229.5px;top:335px;font-size:8.54px;color:#1a1a1a;transform:scaleX(0.89);transform-origin:0 50%;">Kopiëren</div>
<div class="t" style="left:229.5px;top:354.6px;font-size:8.54px;color:#1a1a1a;transform:scaleX(0.89);transform-origin:0 50%;">Snelkoppeling maken</div>
<div class="t" style="left:229.5px;top:369px;font-size:8.54px;color:#1a1a1a;transform:scaleX(0.89);transform-origin:0 50%;">Verwijderen</div>
<div class="t" style="left:229.5px;top:383.5px;font-size:8.54px;color:#1a1a1a;transform:scaleX(0.89);transform-origin:0 50%;">Naam wijzigen</div>
<div class="t" style="left:229.5px;top:403px;font-size:8.54px;color:#1a1a1a;transform:scaleX(0.89);transform-origin:0 50%;">Eigenschappen</div>
<div class="a" style="left:214px;top:262px;width:176px;height:1px;background:#c8c8c8"></div>
<div class="a" style="left:214px;top:296px;width:176px;height:1px;background:#c8c8c8"></div>
<div class="a" style="left:214px;top:315px;width:176px;height:1px;background:#c8c8c8"></div>
<div class="a" style="left:214px;top:349px;width:176px;height:1px;background:#c8c8c8"></div>
<div class="a" style="left:214px;top:397px;width:176px;height:1px;background:#c8c8c8"></div>
<svg class="a" style="left:383px;top:267px" width="6" height="10" viewBox="0 0 6 10"><path d="M1 1l3.5 4L1 9" stroke="#333" stroke-width="0.9" fill="none"/></svg>
<svg class="a" style="left:383px;top:301px" width="6" height="10" viewBox="0 0 6 10"><path d="M1 1l3.5 4L1 9" stroke="#333" stroke-width="0.9" fill="none"/></svg>
<svg class="a" style="left:213px;top:189px" width="12" height="11" viewBox="0 0 12 11"><path d="M0.8 3.2C0.8 1.4 2.6 0.8 3.8 2L6 4.6 8.2 2C9.4 0.8 11.2 1.4 11.2 3.2 11.2 6.4 9.8 8.6 7.6 10.2L7.5 6.8 6 8.8 4.5 6.8 4.4 10.2C2.2 8.6 0.8 6.4 0.8 3.2z" fill="#1c5cb8"/></svg>
<svg class="a" style="left:213px;top:218px" width="12" height="12" viewBox="0 0 12 12"><rect x="0.5" y="0.5" width="11" height="11" fill="#1f74d4"/><path d="M6 2.2l3.5 1.2v3c0 2-1.6 3.2-3.5 4-1.9-.8-3.5-2-3.5-4v-3z" fill="#fff"/><path d="M6 2.5v8M2.8 6h6.4" stroke="#1f74d4" stroke-width="0.9"/></svg>
<svg class="a" style="left:213px;top:233px" width="12" height="11" viewBox="0 0 12 11"><path d="M1.5 4v6h8" stroke="#444" stroke-width="0.9" fill="none"/><path d="M3.5 8c0-3 2-4.5 5-4.5V2l2.5 2.5L8.5 7V5.5C6 5.5 4.5 6.5 3.5 8z" fill="none" stroke="#444" stroke-width="0.8"/></svg>
<div class="a" style="left:0px;top:537px;width:1000px;height:26px;background:#4a1e29"></div>
<svg class="a" style="left:9px;top:544px" width="13" height="12" viewBox="0 0 13 12"><path d="M1 2.2l4.6-.7v4H1zM6.3 1.4L12 .6v4.9H6.3zM1 6.3h4.6v4.1L1 9.8zM6.3 6.3H12v5l-5.7-.8z" fill="#fff"/></svg>
<div class="a" style="left:31px;top:537px;width:224px;height:26px;background:#f0f0f0;border-bottom:1px solid #d0d0d0"></div>
<svg class="a" style="left:38px;top:544px" width="13" height="12" viewBox="0 0 13 12"><circle cx="7.8" cy="4.6" r="3.4" stroke="#333" stroke-width="1" fill="none"/><path d="M5.3 7.2L1.3 11.2" stroke="#333" stroke-width="1.1"/></svg>
<div class="t" style="left:58px;top:545.5px;font-size:9.9px;color:#3a3a3a;">Typ hier om te zoeken</div>
<svg class="a" style="left:263px;top:543px" width="16" height="13" viewBox="0 0 16 13"><rect x="3" y="2.5" width="7" height="8" fill="none" stroke="#ddd" stroke-width="1"/><path d="M1 2h2M1 11h2M10 2h2M10 11h2M13.5 2v1M13.5 5v6" stroke="#ddd" stroke-width="1"/></svg>
<div class="a" style="left:321px;top:537px;width:32px;height:26px;background:#6e4c54"></div>
<div class="a" style="left:291px;top:561px;width:27px;height:2px;background:#a8d4f8"></div>
<div class="a" style="left:322px;top:561px;width:30px;height:2px;background:#a8d4f8"></div>
<svg class="a" style="left:296px;top:541px" width="17" height="17" viewBox="0 0 17 17"><circle cx="8.5" cy="8.5" r="7.5" fill="#db4437"/><path d="M8.5 8.5L2 12.2A7.5 7.5 0 0 0 9 16z" fill="#0f9d58"/><path d="M8.5 8.5L15 4.8A7.5 7.5 0 0 1 9 16z" fill="#ffcd40"/><path d="M2 12.2A7.5 7.5 0 0 1 2.2 4.6L8.5 8.5z" fill="#0f9d58"/><circle cx="8.5" cy="8.5" r="3.6" fill="#fff"/><circle cx="8.5" cy="8.5" r="2.8" fill="#4285f4"/></svg>
<svg class="a" style="left:328px;top:542px" width="17" height="15" viewBox="0 0 17 15"><path d="M1 1.5h5l1.2 1.5H16v11H1z" fill="#f3c13a"/><rect x="1" y="4.5" width="15" height="9.5" fill="#ffd65c"/><path d="M5 14V9.5h7V14" stroke="#2a8be0" stroke-width="2" fill="none"/></svg>
<svg class="a" style="left:360px;top:543px" width="18" height="13" viewBox="0 0 18 13"><path d="M1 4.5L9 .8l8 3.7v8H1z" fill="#fff"/><path d="M1 4.5l8 4.5 8-4.5" stroke="#4a1e29" stroke-width="0.9" fill="none"/></svg>
<svg class="a" style="left:392px;top:542px" width="17" height="15" viewBox="0 0 17 15"><rect x="7" y="1.5" width="9" height="12" fill="#fff"/><path d="M8.5 4h6M8.5 6.5h6M8.5 9h6M8.5 11.5h6" stroke="#2b579a" stroke-width="0.9"/><path d="M0.5 2.5L10 1v13l-9.5-1.5z" fill="#2b579a"/><text x="2" y="10.8" font-size="7" font-weight="bold" fill="#fff" font-family="Liberation Sans">W</text></svg>
<svg class="a" style="left:427px;top:542px" width="13" height="14" viewBox="0 0 13 14"><path d="M6.5 1l5.5 2v4c0 3.2-2.5 5.3-5.5 6.5C3.5 12.3 1 10.2 1 7V3z" fill="#fff"/><path d="M6.5 1v12.5M1 6.5h11" stroke="#4a1e29" stroke-width="1"/></svg>
<svg class="a" style="left:833px;top:545px" width="12" height="8" viewBox="0 0 12 8"><path d="M1.5 6.5l4.5-4.5 4.5 4.5" stroke="#fff" stroke-width="1" fill="none"/></svg>
<svg class="a" style="left:849px;top:545px" width="14" height="9" viewBox="0 0 14 9"><rect x="0.8" y="1" width="10.5" height="6.5" fill="none" stroke="#fff" stroke-width="0.9"/><rect x="2" y="2.2" width="8.2" height="4.1" fill="#fff"/><rect x="11.5" y="3" width="1.5" height="2.5" fill="#fff"/></svg>
<svg class="a" style="left:866px;top:543px" width="11" height="11" viewBox="0 0 11 11"><path d="M1.5 9.5A8 8 0 0 1 9.5 1.5M3.5 9.5A6 6 0 0 1 9.5 3.5M5.5 9.5A4 4 0 0 1 9.5 5.5M7.5 9.5a2 2 0 0 1 2-2" stroke="#ddd" stroke-width="0.9" fill="none"/></svg>
<svg class="a" style="left:879px;top:543px" width="14" height="12" viewBox="0 0 14 12"><path d="M1 4h2.5L7 1v10L3.5 8H1z" fill="none" stroke="#fff" stroke-width="0.9"/><path d="M9 4a2.5 2.5 0 0 1 0 4M10.5 2.5a5 5 0 0 1 0 7M12 1a7 7 0 0 1 0 10" stroke="#ddd" stroke-width="0.8" fill="none"/></svg>
<div class="t" style="left:898px;top:545.5px;font-size:8.54px;color:#fff;transform:scaleX(0.89);transform-origin:0 50%;">NLD</div>
<div class="a" style="left:997px;top:537px;width:1px;height:26px;background:#6e5058"></div>
<div class="t" style="left:932px;top:538.5px;font-size:8.31px;color:#fff;transform:scaleX(0.89);transform-origin:0 50%;">20:02</div>
<div class="t" style="left:922px;top:551px;font-size:8.76px;color:#fff;transform:scaleX(0.89);transform-origin:0 50%;">16/10/2019</div>
<svg class="a" style="left:972px;top:543px" width="14" height="14" viewBox="0 0 14 14"><path d="M1 1.5h12v8.5H8l-2 2.5-1-2.5H1z" fill="none" stroke="#fff" stroke-width="0.9"/></svg>
</body></html>
